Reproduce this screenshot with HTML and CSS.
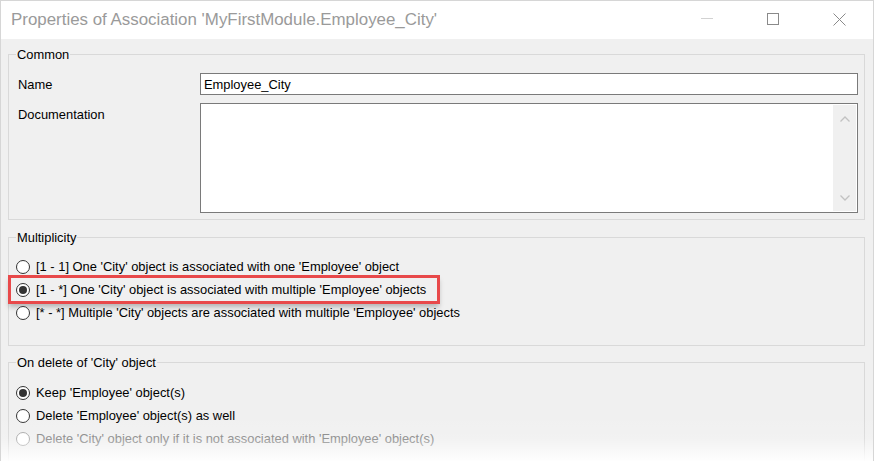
FILE: index.html
```html
<!DOCTYPE html>
<html>
<head>
<meta charset="utf-8">
<link rel="stylesheet" href="styles.css">
</head>
<body>
<div class="window">
  <div class="titlebar">
    <div class="title">Properties of Association 'MyFirstModule.Employee_City'</div>
    <div class="controls">
      <span class="ctl"><svg width="13" height="13" viewBox="0 0 13 13"><line x1="0" y1="5.5" x2="12" y2="5.5" stroke="#d2d2d2" stroke-width="1"/></svg></span>
      <span class="ctl"><svg width="13" height="13" viewBox="0 0 13 13"><rect x="0.5" y="0.5" width="11" height="11" fill="none" stroke="#8a8a8a" stroke-width="1"/></svg></span>
      <span class="ctl"><svg width="13" height="13" viewBox="0 0 13 13"><path d="M0.5 0.5 L12.5 12.5 M12.5 0.5 L0.5 12.5" stroke="#8a8a8a" stroke-width="1" fill="none"/></svg></span>
    </div>
  </div>
  <div class="body">
    <fieldset class="group common">
      <legend>Common</legend>
      <div class="form">
        <div class="lbl">Name</div>
        <div class="input">Employee_City</div>
        <div class="lbl doc">Documentation</div>
        <div class="textarea">
          <div class="ta-area"></div>
          <div class="scrollbar">
            <svg width="10" height="6" viewBox="0 0 10 6"><path d="M0.5 5.5 L5 1 L9.5 5.5" stroke="#c2c2c2" stroke-width="1.3" fill="none"/></svg>
            <svg width="10" height="6" viewBox="0 0 10 6"><path d="M0.5 0.5 L5 5 L9.5 0.5" stroke="#c2c2c2" stroke-width="1.3" fill="none"/></svg>
          </div>
        </div>
      </div>
    </fieldset>

    <fieldset class="group multi">
      <legend>Multiplicity</legend>
      <div class="radios">
        <div class="row"><span class="radio"></span><span>[1 - 1] One 'City' object is associated with one 'Employee' object</span></div>
        <div class="row hl"><span class="radio checked"></span><span>[1 - *] One 'City' object is associated with multiple 'Employee' objects</span></div>
        <div class="row"><span class="radio"></span><span>[* - *] Multiple 'City' objects are associated with multiple 'Employee' objects</span></div>
      </div>
    </fieldset>

    <fieldset class="group del">
      <legend>On delete of 'City' object</legend>
      <div class="radios">
        <div class="row"><span class="radio checked"></span><span>Keep 'Employee' object(s)</span></div>
        <div class="row"><span class="radio"></span><span>Delete 'Employee' object(s) as well</span></div>
        <div class="row disabled"><span class="radio"></span><span>Delete 'City' object only if it is not associated with 'Employee' object(s)</span></div>
      </div>
    </fieldset>
  </div>
  <div class="fade"></div>
</div>
</body>
</html>
```

FILE: styles.css
```css
html, body {
  margin: 0;
  padding: 0;
  background: #ffffff;
}

body {
  width: 874px;
  height: 461px;
  overflow: hidden;
  font-family: "Liberation Sans", Arial, sans-serif;
  font-size: 12.9px;
  color: #000;
}

.window {
  position: relative;
  box-sizing: border-box;
  width: 874px;
  height: 461px;
  border: 1px solid #d6d6d6;
  border-bottom: none;
  background: #f0f0f0;
  overflow: hidden;
  display: flex;
  flex-direction: column;
}

.titlebar {
  height: 38px;
  background: #ffffff;
  display: flex;
  align-items: center;
  justify-content: space-between;
  flex-shrink: 0;
}

.title {
  padding-left: 10px;
  font-size: 16.9px;
  color: #9a9a9a;
  margin-top: -1px;
}

.controls {
  display: flex;
  align-items: center;
  padding-right: 27px;
  gap: 53px;
  margin-top: -2px;
}

.ctl {
  display: flex;
  width: 13px;
  height: 13px;
}

.body {
  padding: 0 8px 0 7px;
  display: flex;
  flex-direction: column;
}

.group {
  margin: 0;
  border: 1px solid #d9d9d9;
  padding: 0 6px 0 9px;
  min-width: 0;
}

.group legend {
  padding: 0 1px;
  margin-left: -2px;
  line-height: 15px;
}

.common {
  margin-top: 8px;
  padding-top: 11px;
  padding-bottom: 6px;
}

.form {
  display: grid;
  grid-template-columns: 182px 1fr;
  grid-template-rows: 22px 110px;
  row-gap: 8px;
}

.lbl {
  align-self: center;
  padding-top: 1px;
}

.lbl.doc {
  align-self: start;
  padding-top: 4px;
}

.input {
  box-sizing: border-box;
  border: 1px solid #7a7a7a;
  background: #fff;
  padding: 0 3px;
  display: flex;
  align-items: center;
}

.textarea {
  box-sizing: border-box;
  border: 1px solid #7a7a7a;
  background: #fff;
  display: flex;
  padding: 1px;
}

.ta-area {
  flex: 1;
}

.scrollbar {
  width: 23px;
  background: #f0f0f0;
  display: flex;
  flex-direction: column;
  align-items: center;
  justify-content: space-between;
  padding: 11px 0 10px;
}

.multi {
  margin-top: 10px;
  padding-top: 10px;
  padding-bottom: 21px;
}

.del {
  margin-top: 9px;
  padding-top: 11px;
  padding-bottom: 30px;
}

.radios {
  display: flex;
  flex-direction: column;
}

.row {
  height: 23px;
  display: flex;
  align-items: center;
  gap: 6px;
  width: fit-content;
  margin-left: -2px;
}

.row.hl {
  margin-left: -7px;
  padding: 0 11px 0 5px;
  box-shadow: 0 0 0 3px #e8494a, 0 4px 5px 2px rgba(0, 0, 0, 0.25);
}

.radio {
  box-sizing: border-box;
  width: 14px;
  height: 14px;
  border-radius: 50%;
  border: 1px solid #333;
  background: #fff;
  display: flex;
  align-items: center;
  justify-content: center;
  flex-shrink: 0;
}

.radio.checked::after {
  content: "";
  width: 8px;
  height: 8px;
  border-radius: 50%;
  background: #333;
}

.row.disabled {
  color: #858585;
}

.row.disabled .radio {
  border-color: #a8a8a8;
}

.fade {
  position: absolute;
  left: 0;
  right: 0;
  bottom: 0;
  height: 46px;
  background: linear-gradient(to bottom, rgba(255,255,255,0) 0%, rgba(255,255,255,0.12) 50%, rgba(255,255,255,0.95) 100%);
  pointer-events: none;
}
```
